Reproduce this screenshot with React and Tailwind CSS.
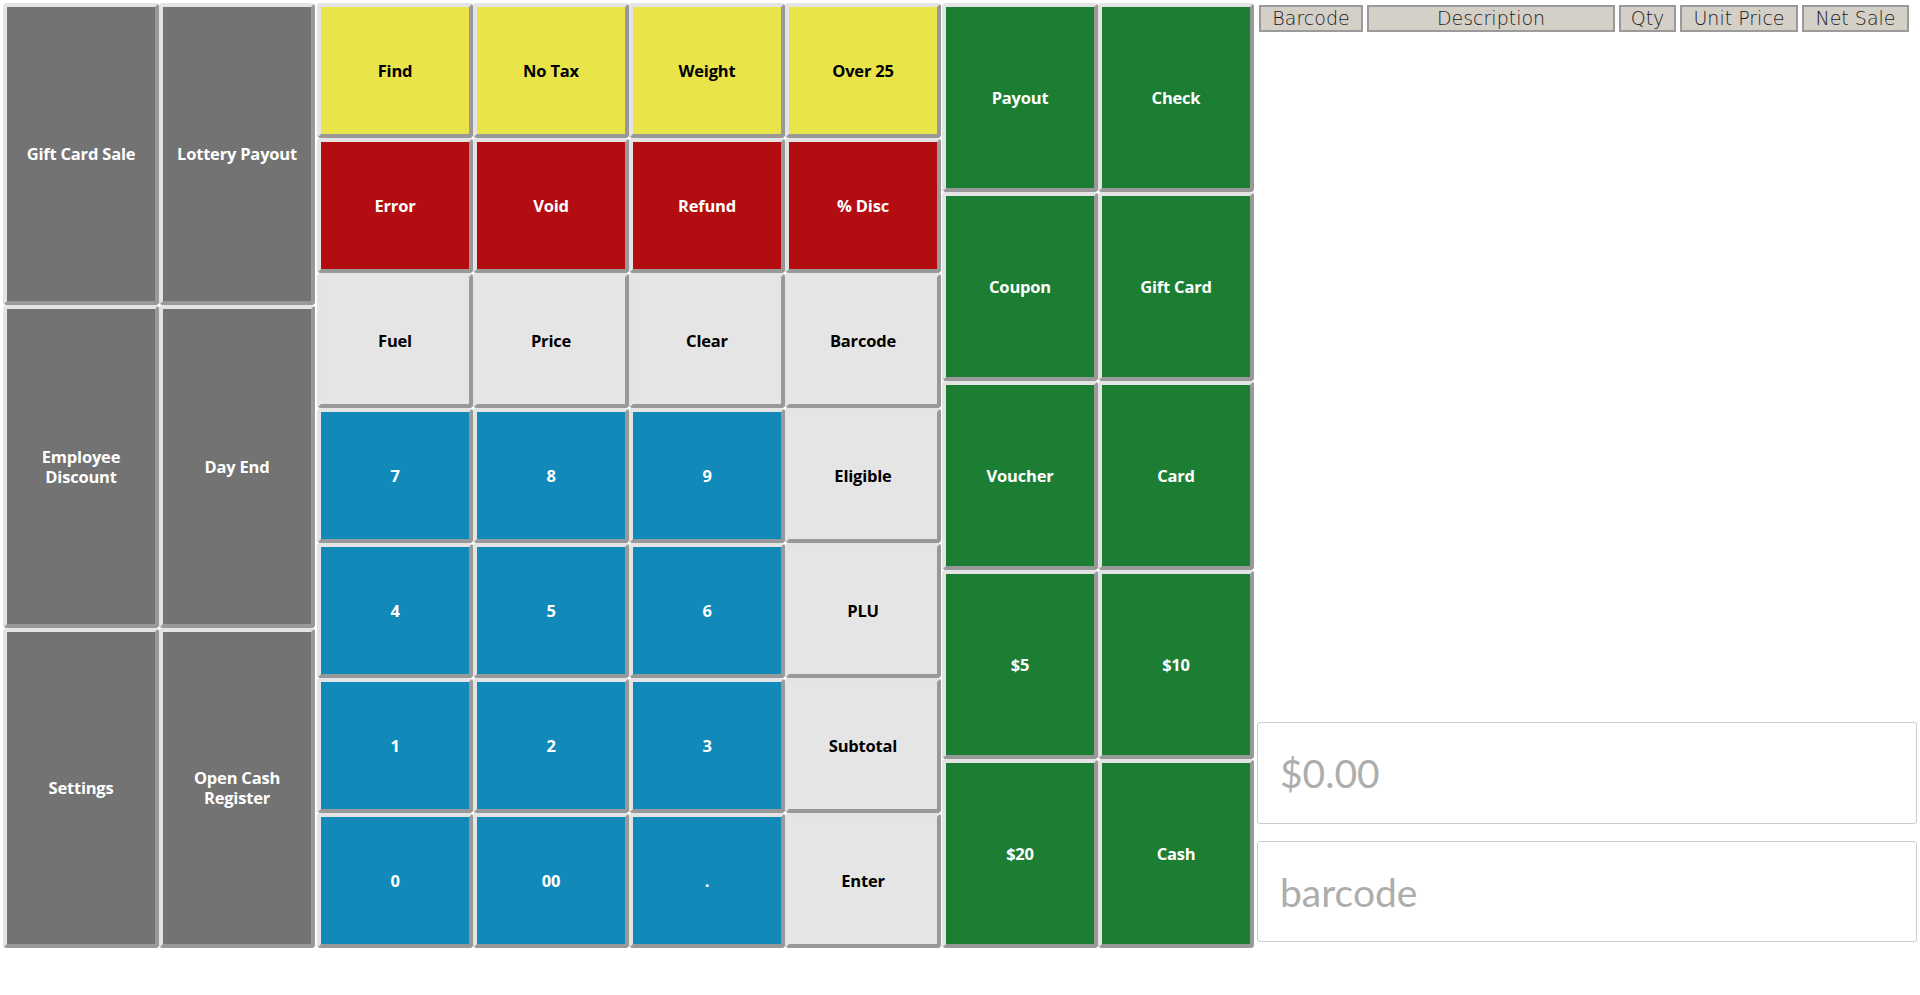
import React from 'react';

const FONT = { fontFamily: '"Open Sans", Lato, sans-serif' };

const TONES = {
  gray: 'bg-[#737373] text-white',
  yellow: 'bg-[#eae44b] text-black',
  red: 'bg-[#b30d12] text-white',
  light: 'bg-[#e5e5e5] text-black',
  blue: 'bg-[#118ab9] text-white',
  green: 'bg-[#1b7e33] text-white',
};

function Key({ tone, children }) {
  return (
    <button
      className={`flex items-center justify-center text-center px-2 border-4 border-t-[#e4e4e4] border-l-[#e4e4e4] border-r-[#999999] border-b-[#999999] rounded-[4px] font-bold text-[16.5px] leading-5 tracking-[-0.2px] ${TONES[tone]}`}
    >
      {children}
    </button>
  );
}

const PAD = [
  ['Find', 'yellow'], ['No Tax', 'yellow'], ['Weight', 'yellow'], ['Over 25', 'yellow'],
  ['Error', 'red'], ['Void', 'red'], ['Refund', 'red'], ['% Disc', 'red'],
  ['Fuel', 'light'], ['Price', 'light'], ['Clear', 'light'], ['Barcode', 'light'],
  ['7', 'blue'], ['8', 'blue'], ['9', 'blue'], ['Eligible', 'light'],
  ['4', 'blue'], ['5', 'blue'], ['6', 'blue'], ['PLU', 'light'],
  ['1', 'blue'], ['2', 'blue'], ['3', 'blue'], ['Subtotal', 'light'],
  ['0', 'blue'], ['00', 'blue'], ['.', 'blue'], ['Enter', 'light'],
];

const TENDER = ['Payout', 'Check', 'Coupon', 'Gift Card', 'Voucher', 'Card', '$5', '$10', '$20', 'Cash'];

const COLUMNS = [
  ['Barcode', 'w-[104px]'],
  ['Description', 'w-[248px]'],
  ['Qty', 'w-[57px]'],
  ['Unit Price', 'w-[118px]'],
  ['Net Sale', 'w-[107px]'],
];

export default function App() {
  return (
    <div className="w-[1920px] h-[995px] bg-white pt-[3px] pl-[3px]" style={FONT}>
      <div className="flex h-[945px]">
        {/* side functions */}
        <div className="grid grid-cols-2 grid-rows-[302px_323px_320px] w-[312px]">
          <Key tone="gray">Gift Card Sale</Key>
          <Key tone="gray">Lottery Payout</Key>
          <Key tone="gray">Employee<br />Discount</Key>
          <Key tone="gray">Day End</Key>
          <Key tone="gray">Settings</Key>
          <Key tone="gray">Open Cash<br />Register</Key>
        </div>

        {/* keypad */}
        <div className="grid grid-cols-4 grid-rows-7 w-[624px] ml-[2px]">
          {PAD.map(([label, tone]) => (
            <Key key={label} tone={tone}>{label}</Key>
          ))}
        </div>

        {/* tenders */}
        <div className="grid grid-cols-2 grid-rows-5 w-[312px] ml-[1px]">
          {TENDER.map((label) => (
            <Key key={label} tone="green">{label}</Key>
          ))}
        </div>

        {/* sale panel */}
        <div className="flex flex-col w-[660px] ml-[3px]">
          <div className="flex gap-[4px] mt-[2px] ml-[2px]">
            {COLUMNS.map(([label, w]) => (
              <div
                key={label}
                className={`${w} h-[27px] flex items-center justify-center bg-[#d4d0c8] border-2 border-[#9a9a9a] text-[#1a1a1a] text-[19px] font-extralight leading-none`}
                style={{ fontFamily: '"DejaVu Sans", sans-serif' }}
              >
                {label}
              </div>
            ))}
          </div>

          <div className="mt-auto mb-[6px] flex flex-col gap-[17px]">
            <input
              placeholder="$0.00"
              className="h-[102px] w-full border border-[#cccccc] rounded-[3px] pl-[22px] text-[39px] outline-none placeholder:text-[#adadad]"
              style={{ fontFamily: 'Lato, sans-serif' }}
            />
            <input
              placeholder="barcode"
              className="h-[101px] w-full border border-[#cccccc] rounded-[3px] pl-[22px] text-[39px] outline-none placeholder:text-[#adadad]"
              style={{ fontFamily: 'Lato, sans-serif' }}
            />
          </div>
        </div>
      </div>
    </div>
  );
}
